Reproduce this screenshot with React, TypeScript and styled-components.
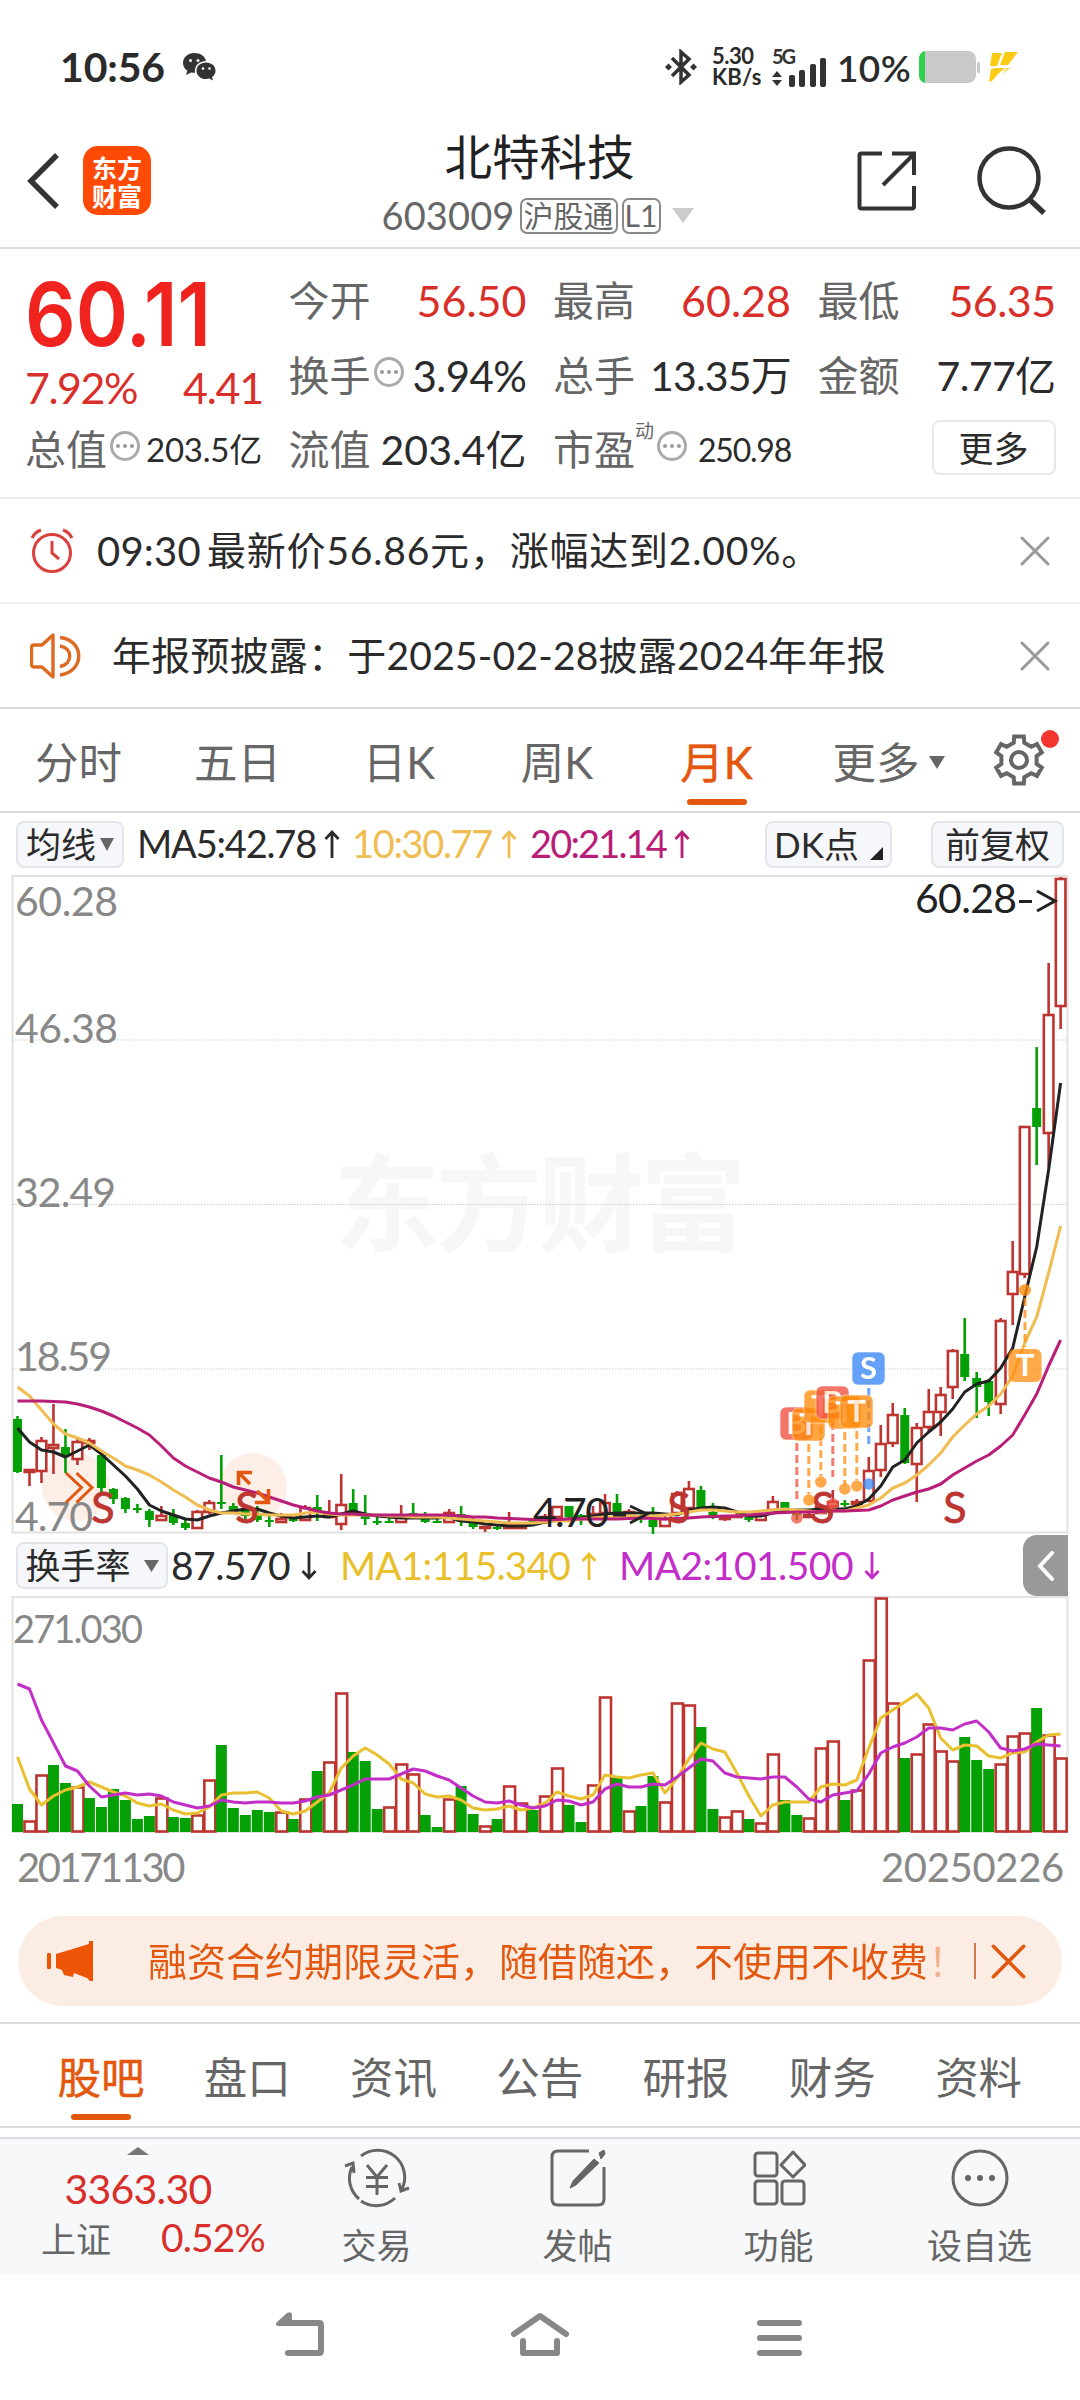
import React, { useLayoutEffect, useRef } from "react";
import styled, { createGlobalStyle } from "styled-components";

const SANS = '"Lato", "Noto Sans CJK SC", sans-serif';
const RED = "#d92f2b";
const ORANGE = "#e3570f";
const GREY = "#666";
const INK = "#2b2b2b";

const Global = createGlobalStyle`
  *{box-sizing:border-box}
  body{margin:0;background:#fff;font-family:${SANS};color:${INK};width:1080px;overflow-x:hidden}
  svg{display:block;flex:none}
`;

/* ---------- text that is tracked to an exact width ---------- */
const FitBox = styled.span<{ $size: number; $color?: string; $weight?: number; $ml?: number; $dy?: number }>`
  display: inline-block;
  white-space: nowrap;
  flex: none;
  font-size: ${(p) => p.$size}px;
  line-height: 1.2;
  font-weight: ${(p) => p.$weight ?? 400};
  color: ${(p) => p.$color ?? INK};
  margin-left: ${(p) => p.$ml ?? 0}px;
  position: relative;
  top: ${(p) => p.$dy ?? 0}px;
`;
type FitProps = { w: number; size: number; color?: string; weight?: number; ml?: number; dy?: number; children: string };
const Fit = ({ w, size, color, weight, ml, dy, children }: FitProps) => {
  const ref = useRef<HTMLSpanElement>(null);
  useLayoutEffect(() => {
    const el = ref.current;
    if (!el) return;
    el.style.width = "auto";
    el.style.letterSpacing = "0px";
    const natural = el.getBoundingClientRect().width;
    el.style.letterSpacing = `${(w - natural) / children.length}px`;
    el.style.width = `${w}px`;
  }, [w, children]);
  return (
    <FitBox ref={ref} $size={size} $color={color} $weight={weight} $ml={ml} $dy={dy}>
      {children}
    </FitBox>
  );
};

const Page = styled.main`
  width: 1080px;
  height: 2400px;
  display: flex;
  flex-direction: column;
  background: #fff;
  overflow: hidden;
`;

/* ---------- status bar ---------- */
const StatusBar = styled.div`
  height: 112px;
  padding: 22px 61px 0 60px;
  display: flex;
  align-items: center;
`;
const Stack = styled.div`
  display: flex;
  flex-direction: column;
  margin-left: 15px;
  width: 50px;
`;
const Spacer = styled.div`
  flex: 1;
`;

/* ---------- header ---------- */
const Header = styled.header`
  height: 137px;
  border-bottom: 2px solid #dcdcdc;
  padding: 3px 33px 0 26px;
  display: flex;
  align-items: center;
`;
const Logo = styled.div`
  width: 68px;
  height: 69px;
  margin: 0 0 0 24px;
  border-radius: 15px;
  background: #ff4a05;
  color: #fff;
  font: 700 25px/28px "Noto Sans CJK SC", sans-serif;
  display: flex;
  flex-direction: column;
  align-items: center;
  justify-content: center;
`;
const TitleBlock = styled.div`
  flex: 1;
  height: 100%;
  display: flex;
  flex-direction: column;
  align-items: center;
  padding: 13px 0 0 71px;
`;
const Title = styled.div`
  font-size: 47.5px;
  line-height: 58px;
  color: #222;
`;
const SubTitle = styled.div`
  display: flex;
  align-items: center;
  height: 38px;
  margin: 11px 4px 0 0;
`;
const Badge = styled.span<{ $w: number; $ml: number }>`
  width: ${(p) => p.$w}px;
  height: 36px;
  margin-left: ${(p) => p.$ml}px;
  border: 2px solid #8a8a8a;
  border-radius: 7px;
  font-size: 30px;
  line-height: 31px;
  color: #666;
  text-align: center;
  white-space: nowrap;
`;

/* ---------- quote ---------- */
const Quote = styled.section`
  height: 251px;
  padding: 15px 0 0 25px;
  border-bottom: 2px solid #eee;
  display: grid;
  grid-template-columns: 237px repeat(3, 238px);
  grid-template-rows: 75px 74px 74px;
  column-gap: 26.500px;
`;
const PriceCell = styled.div`
  grid-row: span 2;
  display: flex;
  flex-direction: column;
`;
const BigPrice = styled.div`
  font: 600 88px/100px Inter, ${SANS};
  color: #f0231f;
  white-space: nowrap;
  letter-spacing: 0;
  transform: scaleX(0.9);
  transform-origin: 0 50%;
`;
const PriceSub = styled.div`
  display: flex;
  justify-content: space-between;
  width: 238px;
  margin-top: -2px;
`;
const Cell = styled.div`
  display: flex;
  align-items: center;
`;
const Label = styled.span`
  font-size: 41px;
  line-height: 50px;
  color: ${GREY};
  white-space: nowrap;
`;
const Sup = styled.span`
  font-size: 19px;
  line-height: 20px;
  color: ${GREY};
  align-self: flex-start;
  margin-top: 8px;
`;
const MoreButton = styled.button`
  width: 124px;
  height: 55px;
  margin: 0 0 4px auto;
  border: 2px solid #e8e8e8;
  border-radius: 8px;
  background: #fff;
  color: ${INK};
  font: 35px/48px ${SANS};
  padding: 0;
`;

/* ---------- notices ---------- */
const Notice = styled.div<{ $line: string }>`
  height: 105px;
  border-bottom: 2px solid ${(p) => p.$line};
  padding: 0 30px;
  display: flex;
  align-items: center;
`;

/* ---------- tabs ---------- */
const Tabs = styled.nav<{ $h: number; $lineTop?: boolean }>`
  height: ${(p) => p.$h}px;
  border-top: ${(p) => (p.$lineTop ? 2 : 0)}px solid #dcdcdc;
  border-bottom: 2px solid #dcdcdc;
  display: flex;
  flex: none;
`;
const Tab = styled.div<{ $w: number; $on?: boolean; $pl?: number }>`
  width: ${(p) => p.$w}px;
  flex: none;
  display: flex;
  align-items: center;
  justify-content: center;
  position: relative;
  padding-top: 4px;
  padding-left: ${(p) => p.$pl ?? 0}px;
  font-size: 43.5px;
  line-height: 52px;
  color: ${(p) => (p.$on ? ORANGE : GREY)};
  -webkit-text-stroke: ${(p) => (p.$on ? 0.5 : 0)}px ${ORANGE};
  &::after {
    content: "";
    display: ${(p) => (p.$on ? "block" : "none")};
    position: absolute;
    left: calc(50% + ${(p) => (p.$pl ?? 0) / 2}px);
    bottom: 6px;
    width: 60px;
    height: 6px;
    margin-left: -30px;
    border-radius: 3px;
    background: ${ORANGE};
  }
`;
const GearWrap = styled.div`
  position: relative;
  margin: 25px 0 0 15px;
`;
const Dot = styled.i`
  position: absolute;
  right: -14px;
  top: -4px;
  width: 18px;
  height: 18px;
  border-radius: 50%;
  background: #f43530;
`;

/* ---------- indicator rows ---------- */
const LegendRow = styled.div<{ $h: number }>`
  height: ${(p) => p.$h}px;
  flex: none;
  display: flex;
  align-items: center;
  padding-left: 16px;
`;
const Chip = styled.div<{ $w: number; $ml?: number }>`
  width: ${(p) => p.$w}px;
  height: 47px;
  flex: none;
  margin-left: ${(p) => p.$ml ?? 0}px;
  border: 2px solid #e3e5ea;
  border-radius: 8px;
  background: #f6f7fa;
  font-size: 35px;
  line-height: 43px;
  display: flex;
  align-items: center;
  justify-content: center;
  white-space: nowrap;
`;
const Collapse = styled.div`
  width: 45px;
  height: 61px;
  margin-left: auto;
  margin-right: 12px;
  border-radius: 14px 0 0 14px;
  background: #999;
  display: flex;
  align-items: center;
  justify-content: center;
`;
const Dates = styled.div`
  height: 82px;
  flex: none;
  padding: 9px 16px 0 17px;
  display: flex;
  justify-content: space-between;
`;

/* ---------- banner ---------- */
const Banner = styled.div`
  height: 90px;
  flex: none;
  margin: 0 18px 16px;
  border-radius: 45px;
  background: #fcede4;
  color: ${ORANGE};
  display: flex;
  align-items: center;
  padding-left: 29px;
`;
const BannerText = styled.span`
  margin-left: 54px;
  width: 826px;
  font-size: 39px;
  line-height: 50px;
  white-space: nowrap;
  background: linear-gradient(90deg, ${ORANGE} 775px, #f3b08a 788px);
  -webkit-background-clip: text;
  color: transparent;
`;
const Rule = styled.i`
  width: 2px;
  height: 36px;
  background: #d9764a;
  margin-right: 15px;
`;

/* ---------- bottom bar ---------- */
const Bottom = styled.footer`
  margin-top: 9px;
  height: 137px;
  flex: none;
  border-top: 2px solid #d9dbde;
  background: #f7f8fa;
  display: flex;
`;
const IndexBox = styled.div`
  width: 276px;
  display: flex;
  flex-direction: column;
  align-items: center;
  padding-top: 8px;
`;
const IndexLine = styled.div`
  display: flex;
  align-items: center;
  width: 224px;
  height: 48px;
  margin: 9px 0 0 30px;
  font-size: 35px;
  color: ${GREY};
  justify-content: space-between;
`;
const Action = styled.div`
  width: 201px;
  display: flex;
  flex-direction: column;
  align-items: center;
  padding-top: 9px;
  font-size: 35px;
  line-height: 44px;
  color: ${GREY};
  gap: 15px;
`;
const SysNav = styled.div`
  height: 126px;
  padding: 37px 0 0 274px;
  display: flex;
  gap: 184px;
`;

/* ---------- icons ---------- */
const Cross = ({ s, c, w = 3 }: { s: number; c: string; w?: number }) => (
  <svg width={s} height={s} viewBox="0 0 30 30" stroke={c} strokeWidth={w} fill="none" strokeLinecap="round">
    <path d="M2 2L28 28M28 2L2 28" />
  </svg>
);
const Info = styled.i`
  flex: none;
  width: 30px;
  height: 30px;
  margin: -8px 0 0 3px;
  border: 3px solid #aaa;
  border-radius: 50%;
  display: flex;
  align-items: center;
  justify-content: center;
  gap: 3px;
`;
const InfoDot = styled.b`
  width: 4px;
  height: 4px;
  border-radius: 50%;
  background: #999;
`;
const InfoIcon = () => (
  <Info>
    <InfoDot />
    <InfoDot />
    <InfoDot />
  </Info>
);
const ArrowSvg = styled.svg<{ $ml: number }>`
  margin-left: ${(p) => p.$ml}px;
`;
const Arrow = ({ up, c, ml }: { up?: boolean; c: string; ml: number }) => (
  <ArrowSvg $ml={ml} width="16" height="30" viewBox="0 0 16 30" fill="none" stroke={c} strokeWidth="2.8">
    <path d={up ? "M8 29V3M1.5 10L8 3L14.5 10" : "M8 1V27M1.5 20L8 27L14.5 20"} />
  </ArrowSvg>
);
const TriSvg = styled.svg<{ $ml: number }>`
  margin-left: ${(p) => p.$ml}px;
`;
const Tri = ({ w, h, c, ml = 0 }: { w: number; h: number; c: string; ml?: number }) => (
  <TriSvg $ml={ml} width={w} height={h} viewBox="0 0 10 10" preserveAspectRatio="none" fill={c}>
    <path d="M0 0H10L5 10Z" />
  </TriSvg>
);
const WeChat = styled.svg`
  margin-left: 17px;
`;
const Offset = styled.div<{ $ml: number; $mt?: number }>`
  flex: none;
  margin-left: ${(p) => p.$ml}px;
  margin-top: ${(p) => p.$mt ?? 0}px;
`;

/* ---------- chart data ---------- */
/* direction (1 up, 0 down), high, body top, body bottom, low, turnover bar top */
const K: number[][] = [
  [0,1416,1419,1472,1473,1804],[1,1469,1469,1472,1486,1821],[1,1437,1440,1471,1483,1775],[1,1404,1444,1448,1474,1765],
  [0,1429,1447,1455,1473,1783],[1,1439,1441,1459,1465,1787],[1,1438,1440,1443,1450,1798],[0,1450,1455,1488,1493,1807],
  [0,1488,1489,1499,1504,1789],[0,1497,1498,1509,1513,1800],[0,1504,1508,1510,1513,1819],[0,1509,1511,1520,1527,1816],
  [1,1506,1515,1520,1521,1798],[0,1509,1515,1523,1525,1817],[0,1520,1523,1528,1530,1818],[1,1510,1511,1528,1529,1815],
  [1,1500,1502,1512,1514,1780],[0,1455,1502,1503,1509,1745],[0,1503,1506,1511,1512,1808],[0,1508,1509,1516,1520,1815],
  [0,1506,1515,1520,1522,1810],[0,1516,1520,1522,1527,1812],[1,1513,1518,1522,1523,1812],[0,1517,1518,1521,1522,1819],
  [1,1505,1507,1520,1521,1799],[0,1495,1507,1512,1521,1771],[1,1500,1514,1517,1518,1762],[1,1474,1504,1524,1530,1693],
  [0,1489,1503,1511,1513,1752],[0,1495,1516,1519,1525,1761],[0,1517,1521,1522,1525,1809],[0,1517,1521,1523,1523,1807],
  [1,1505,1515,1522,1523,1764],[0,1503,1513,1516,1518,1774],[0,1512,1515,1522,1523,1815],[0,1518,1521,1523,1523,1827],
  [1,1509,1512,1522,1523,1799],[0,1506,1514,1522,1526,1786],[0,1516,1522,1527,1529,1814],[1,1526,1526,1528,1532,1826],
  [0,1525,1527,1528,1530,1819],[1,1512,1523,1528,1529,1786],[1,1523,1524,1528,1528,1803],[0,1518,1519,1525,1526,1810],
  [1,1514,1516,1522,1524,1796],[1,1506,1506,1517,1518,1768],[0,1506,1506,1517,1518,1805],[0,1514,1515,1518,1525,1822],
  [1,1506,1513,1518,1520,1785],[1,1494,1502,1513,1514,1697],[0,1494,1503,1513,1515,1778],[1,1509,1511,1513,1514,1811],
  [0,1512,1515,1517,1523,1806],[0,1507,1520,1527,1534,1776],[1,1515,1518,1526,1527,1802],[1,1491,1493,1513,1514,1703],
  [1,1481,1488,1508,1510,1705],[0,1486,1490,1509,1510,1727],[0,1503,1512,1518,1519,1809],[1,1515,1516,1519,1521,1817],
  [1,1513,1515,1517,1518,1811],[0,1515,1516,1520,1522,1819],[1,1513,1514,1520,1521,1823],[1,1496,1501,1510,1511,1754],
  [0,1502,1502,1509,1510,1800],[0,1510,1512,1515,1520,1815],[1,1513,1514,1517,1517,1818],[1,1505,1506,1513,1514,1748],
  [1,1490,1501,1506,1507,1741],[0,1500,1503,1505,1507,1800],[1,1499,1501,1504,1505,1790],[1,1457,1470,1501,1502,1660],
  [1,1425,1443,1470,1477,1598],[1,1403,1414,1443,1447,1703],[0,1408,1415,1463,1464,1758],[1,1423,1427,1464,1502,1754],
  [1,1389,1411,1427,1432,1724],[1,1387,1394,1412,1436,1751],[1,1349,1350,1387,1399,1761],[0,1318,1354,1377,1381,1737],
  [0,1372,1378,1387,1418,1760],[0,1379,1381,1402,1416,1769],[1,1318,1320,1404,1414,1764],[1,1241,1271,1294,1325,1736],
  [1,1126,1126,1274,1278,1733],[0,1047,1108,1127,1165,1708],[1,963,1014,1133,1167,1735],[1,877,878,1006,1029,1758],
];
/* months whose turnover bar has the opposite colour of the price candle */
const FLIPPED = [3, 6, 31, 33];
const candleUp = (i: number) => K[i][0] === 1;
const barUp = (i: number) => (FLIPPED.includes(i) ? !candleUp(i) : candleUp(i));

const MA5 = [1428,1442,1450,1452,1457,1451,1445,1454,1465,1476,1489,1505,1511,1515,1519,1520,1516,1513,1511,1509,1509,1513,1516,1518,1517,1516,1517,1514,1511,1514,1516,1517,1518,1518,1518,1518,1517,1521,1522,1524,1525,1526,1526,1525,1522,1520,1519,1518,1516,1514,1513,1513,1513,1513,1514,1515,1510,1508,1507,1508,1512,1516,1516,1513,1511,1510,1510,1509,1509,1509,1506,1499,1486,1467,1460,1443,1432,1422,1409,1392,1384,1381,1368,1348,1297,1247,1170,1083];
const MA10 = [1387,1396,1410,1424,1434,1438,1443,1451,1458,1466,1470,1475,1482,1490,1497,1505,1510,1513,1513,1514,1514,1515,1515,1515,1513,1512,1514,1515,1515,1515,1515,1516,1516,1517,1517,1517,1518,1519,1520,1521,1522,1523,1523,1523,1522,1521,1521,1519,1518,1517,1517,1516,1516,1516,1515,1514,1512,1510,1510,1511,1512,1512,1511,1510,1509,1510,1511,1512,1511,1511,1508,1505,1498,1488,1483,1475,1465,1453,1437,1425,1414,1406,1394,1376,1343,1317,1273,1226];
const MA20 = [1401,1401,1401,1401.5,1402,1404,1407,1411,1416,1422,1428,1435,1446,1458,1466,1472,1478,1482,1487,1490,1493,1497,1501,1505,1508,1511,1513,1514,1514,1515,1515,1515,1515,1515,1515,1515,1515,1516,1517,1517,1518,1518.5,1519,1519.5,1520,1519.5,1519,1519,1519,1519,1519,1518.5,1518,1518.5,1519,1518.5,1518,1517,1516.5,1516,1516,1515,1514,1513,1512.5,1512,1512,1511.5,1511,1511,1510.5,1510,1506,1500,1496,1492,1489,1484,1475,1468,1461,1455,1446,1435,1415,1394,1366,1340];
const V1 = [1757,1789,1805,1796,1790,1787,1782,1787,1792,1796,1803,1806,1804,1810,1814,1813,1807,1795,1793,1793,1792,1798,1811,1814,1811,1802,1793,1768,1756,1748,1755,1764,1779,1783,1794,1797,1796,1800,1808,1810,1809,1806,1810,1808,1803,1792,1796,1799,1795,1775,1777,1778,1775,1773,1793,1778,1759,1743,1749,1752,1773,1796,1816,1805,1802,1802,1802,1787,1784,1785,1780,1748,1718,1710,1702,1694,1708,1738,1750,1745,1746,1756,1758,1753,1752,1742,1735,1734];
const V2 = [1684,1689,1720,1743,1766,1771,1786,1797,1795,1793,1795,1794,1796,1802,1805,1808,1806,1800,1802,1803,1802,1802,1803,1803,1801,1797,1795,1790,1785,1779,1779,1779,1774,1769,1771,1776,1780,1788,1796,1802,1803,1801,1805,1808,1806,1800,1801,1805,1802,1789,1784,1787,1787,1784,1785,1777,1768,1759,1761,1773,1777,1778,1779,1777,1777,1787,1799,1802,1795,1793,1791,1774,1753,1747,1743,1737,1728,1728,1730,1724,1721,1732,1748,1751,1749,1744,1745,1746];

const X = (i: number) => 17.5 + i * 11.99;
const line = (a: number[]) => a.map((y, i) => `${X(i).toFixed(1)},${y}`).join(" ");
const UP = "#bd3531";
const DOWN = "#05a005";

const tags = [
  { x: 780, y: 1407, t: "B", c: "#f2503f", at: 65, dot: 1518, to: 1499 },
  { x: 792, y: 1408, t: "T", c: "#ff8c0d", at: 66, dot: 1500, to: 1494 },
  { x: 804, y: 1390, t: "T", c: "#ff8c0d", at: 67, dot: 1482, to: 1476 },
  { x: 816, y: 1386, t: "B", c: "#f2503f", at: 68, dot: 1504, to: 1477 },
  { x: 828, y: 1396, t: "T", c: "#ff8c0d", at: 69, dot: 1489, to: 1484 },
  { x: 840, y: 1395, t: "T", c: "#ff8c0d", at: 70, dot: 1486, to: 1480 },
  { x: 852, y: 1352, t: "S", c: "#3a87f8", at: 71, dot: 1484, to: 1444 },
];

const axis: [string, number, number][] = [
  ["60.28", 916, 100],
  ["46.38", 1043, 100],
  ["32.49", 1207, 98],
  ["18.59", 1371, 94],
  ["4.70", 1531, 75],
];

const PriceChart = () => (
  <svg width="1080" height="660" viewBox="0 875 1080 660" fontFamily={SANS}>
    <text x="334" y="1243" fontSize="106" fontWeight="700" fill="#f7f7f7" textLength="412">东方财富</text>
    <path d="M12.500 1532.500V876H1067.500V1532.500Z" fill="none" stroke="#e2e2e2" strokeWidth="2" />
    {[1040, 1204.5, 1369].map((y) => (
      <path key={y} d={`M12 ${y}H1068`} stroke="#ccc" strokeWidth="1.2" strokeDasharray="1.5 1.5" />
    ))}
    <circle cx="76" cy="1487" r="34" fill="#fdeee7" />
    <circle cx="253" cy="1487" r="34" fill="#fdeee7" />
    {axis.map(([t, y, w]) => (
      <text key={t} x="15" y={y} fontSize="41" fill="#888" textLength={w + 3}>{t}</text>
    ))}
    {K.map(([, h, t, b, l], i) => {
      const up = candleUp(i);
      return (
        <g key={i} stroke={up ? UP : DOWN} strokeWidth="2.6">
          <path d={`M${X(i)} ${h}V${t}M${X(i)} ${b}V${l}`} />
          {up ? (
            <rect x={X(i) - 4.8} y={t + 1} width="9.600" height={Math.max(1, b - t - 1)} fill="#fff" />
          ) : (
            <rect x={X(i) - 4.5} y={t} width="9" height={Math.max(2, b - t)} fill={DOWN} stroke="none" />
          )}
        </g>
      );
    })}
    <g fill="none" strokeWidth="3" strokeLinejoin="round">
      <polyline points={line(MA5)} stroke="#222" />
      <polyline points={line(MA10)} stroke="#efbd52" />
      <polyline points={line(MA20)} stroke="#b91e78" />
    </g>
    <g fill="none" stroke={ORANGE} strokeWidth="3">
      <path d="M66 1473L81.500 1487.500L66 1502.500M76.500 1473L92 1487.500L76.500 1502.500" />
      <path d="M250 1484L239 1473M238.500 1485V1472.500H252M257 1491L268 1501M268.500 1489V1502.500H255" strokeWidth="3.600" />
    </g>
    {[103, 247, 679, 823, 955].map((x) => (
      <text key={x} x={x} y="1523" fontSize="43" fontWeight="400" fill={UP} stroke={UP} strokeWidth="0.8" textAnchor="middle">S</text>
    ))}
    <text x="533" y="1527" fontSize="41" fill="#222" textLength="76">4.70</text>
    <path d="M613 1515H626M630 1506L647 1514L630 1523" fill="none" stroke="#222" strokeWidth="2.800" />
    <text x="915" y="913" fontSize="41" fill="#222" textLength="102">60.28</text>
    <path d="M1019 901.500H1032M1037 891L1055 901L1037 911" fill="none" stroke="#222" strokeWidth="3" />
    {tags.map((g) => (
      <g key={g.at}>
        <path d={`M${X(g.at)} ${g.y + 36}V${g.to}`} stroke={g.c} strokeWidth="3" strokeDasharray="8 4" opacity="0.75" />
        <circle cx={X(g.at)} cy={g.dot} r="5.800" fill={g.c} opacity="0.75" />
      </g>
    ))}
    {tags.map((g) => (
      <g key={g.at} opacity="0.78">
        <rect x={g.x} y={g.y} width="33" height="33" rx="6" fill={g.c} stroke="#fff" strokeOpacity="0.6" />
        <text x={g.x + 16.500} y={g.y + 27} fontSize="31" fontWeight="700" fill="#fff" textAnchor="middle">{g.t}</text>
      </g>
    ))}
    <g>
      <circle cx="1025" cy="1290" r="6" fill="#ff8c0d" opacity="0.8" />
      <path d="M1025 1298V1347" stroke="#ff8c0d" strokeWidth="3" strokeDasharray="8 4" opacity="0.75" />
      <rect x="1008.500" y="1349" width="33" height="33" rx="6" fill="#ff8c0d" opacity="0.75" />
      <text x="1025" y="1376" fontSize="31" fontWeight="700" fill="#fff" textAnchor="middle">T</text>
    </g>
  </svg>
);

const TurnoverChart = () => (
  <svg width="1080" height="238" viewBox="0 1596 1080 238" fontFamily={SANS}>
    <path d="M12.500 1832V1597H1067.500V1832Z" fill="none" stroke="#e2e2e2" strokeWidth="2" />
    <text x="13" y="1643" fontSize="38" fill="#888" textLength="130">271.030</text>
    {K.map((k, i) =>
      barUp(i) ? (
        <rect key={i} x={X(i) - 5} y={k[5] + 0.5} width="11" height={1831 - k[5]} fill="#fff" stroke={UP} strokeWidth="2.6" />
      ) : (
        <rect key={i} x={X(i) - 5.5} y={k[5]} width="11" height={1832 - k[5]} fill={DOWN} />
      )
    )}
    <g fill="none" strokeWidth="3" strokeLinejoin="round">
      <polyline points={line(V1)} stroke="#e9c030" />
      <polyline points={line(V2)} stroke="#c32dc8" />
    </g>
  </svg>
);

/* six-tooth cog outline round (26, 26) */
const gearPath = (() => {
  const pts: string[] = [];
  for (let i = 0; i < 6; i++) {
    const a = (i * Math.PI) / 3 - Math.PI / 2;
    [[-0.2, 24], [0.2, 24], [0.3, 18], [0.747, 18]].forEach(([d, r]) =>
      pts.push(`${(26 + r * Math.cos(a + d)).toFixed(1)} ${(26 + r * Math.sin(a + d)).toFixed(1)}`)
    );
  }
  return `M${pts.join("L")}Z`;
})();

const G = { fill: "none", stroke: "#666", strokeWidth: 3 } as const;

export default function App() {
  return (
    <Page>
      <Global />
      <StatusBar>
        <Fit w={105} size={41} weight={700}>10:56</Fit>
        <WeChat width="34" height="29" viewBox="0 0 34 29">
          <path d="M12.500 1C5.500 1 1 5.500 1 11c0 3.200 1.700 6 4.400 7.800L4 23l5-2.600c1.300.3 2.600.5 4 .4C12 14 17 9 24 9 23 4 18.500 1 12.500 1Z" fill="#333" />
          <path d="M24 10.500c-5.500 0-9.500 3.600-9.500 8.200S18.500 27 24 27c1.200 0 2.300-.2 3.300-.5L31 28.500l-1-3.400c2.200-1.500 3.500-3.800 3.500-6.400 0-4.600-4-8.200-9.500-8.200Z" fill="#333" />
          <g fill="#fff"><circle cx="8.500" cy="8.500" r="1.500" /><circle cx="16" cy="8.500" r="1.500" /><circle cx="21" cy="16.500" r="1.300" /><circle cx="27.500" cy="16.500" r="1.300" /></g>
        </WeChat>
        <Spacer />
        <svg width="32" height="36" viewBox="0 0 32 36" fill="none" stroke="#333" strokeWidth="3.500">
          <path d="M7 9L24 26L16 33V3L24 10L7 27" />
          <g fill="#333" stroke="none"><path d="M3.500 14.500L7 18L3.500 21.500L0 18Z" /><path d="M28.500 14.500L32 18L28.500 21.500L25 18Z" /></g>
        </svg>
        <Stack>
          <Fit w={48} size={22} weight={700} dy={2}>5.30</Fit>
          <Fit w={51} size={22} weight={700} dy={-3}>KB/s</Fit>
        </Stack>
        <Offset $ml={10}>
          <svg width="56" height="40" viewBox="0 0 56 40">
            <text x="0" y="17" fontSize="20" fontWeight="700" fill="#333" fontFamily={SANS} textLength="24">5G</text>
            <g fill="#333">
              <path d="M0 30L5 24L10 30ZM0 33L5 39L10 33Z" />
              <rect x="17" y="28" width="6" height="12" rx="2" /><rect x="27" y="23" width="6" height="17" rx="2" />
              <rect x="38" y="17" width="6" height="23" rx="2" /><rect x="48" y="11" width="6" height="29" rx="2" />
            </g>
          </svg>
        </Offset>
        <Fit w={74} size={37} ml={9} weight={600} dy={1}>10%</Fit>
        <Offset $ml={8}>
          <svg width="61" height="32" viewBox="0 0 61 32">
            <rect x="0" y="0" width="57" height="32" rx="8" fill="#c9c9c9" />
            <path d="M6 0C2 1 0 4 0 8v16c0 4 2 7 6 8Z" fill="#2dd24a" />
            <rect x="58" y="11" width="3" height="11" rx="1.500" fill="#c9c9c9" />
          </svg>
        </Offset>
        <Offset $ml={9}>
          <svg width="30" height="30" viewBox="0 0 30 30" fill="#fbcb14">
            <path d="M3 1H13L8 14H1ZM16 0H29L19 13H11ZM7 16H16L9 22L3 29L0 30L2 17ZM18 16H21L13 22Z" />
          </svg>
        </Offset>
      </StatusBar>

      <Header>
        <svg width="33" height="56" viewBox="0 0 33 56" fill="none" stroke="#333" strokeWidth="5.500">
          <path d="M31 2L5 28L31 54" />
        </svg>
        <Logo>
          <span>东方</span>
          <span>财富</span>
        </Logo>
        <TitleBlock>
          <Title>北特科技</Title>
          <SubTitle>
            <Fit w={133} size={38} color="#666">603009</Fit>
            <Badge $w={98} $ml={5}>沪股通</Badge>
            <Badge $w={39} $ml={4}>L1</Badge>
            <Tri w={22} h={15} c="#ccc" ml={11} />
          </SubTitle>
        </TitleBlock>
        <svg width="60" height="60" viewBox="0 0 60 60" fill="none" stroke="#333" strokeWidth="4">
          <path d="M25 2.500H4.500Q2.500 2.500 2.500 4.500V55.500Q2.500 57.500 4.500 57.500H55Q57 57.500 57 55.500V35M35 2.500H57V24M57 3L26 34" />
        </svg>
        <Offset $ml={60}>
          <svg width="70" height="70" viewBox="0 0 70 70" fill="none" stroke="#333" strokeWidth="4.500">
            <circle cx="32" cy="32" r="29.500" />
            <path d="M52 53L67 67" strokeWidth="5.500" />
          </svg>
        </Offset>
      </Header>

      <Quote>
        <PriceCell>
          <BigPrice>60.11</BigPrice>
          <PriceSub>
            <Fit w={112} size={43} color={RED}>7.92%</Fit>
            <Fit w={80} size={43} color={RED}>4.41</Fit>
          </PriceSub>
        </PriceCell>
        <Cell><Label>今开</Label><Spacer /><Fit w={110} size={43} color={RED}>56.50</Fit></Cell>
        <Cell><Label>最高</Label><Spacer /><Fit w={110} size={43} color={RED}>60.28</Fit></Cell>
        <Cell><Label>最低</Label><Spacer /><Fit w={107} size={43} color={RED}>56.35</Fit></Cell>
        <Cell><Label>换手</Label><InfoIcon /><Spacer /><Fit w={114} size={42}>3.94%</Fit></Cell>
        <Cell><Label>总手</Label><Spacer /><Fit w={141} size={41}>13.35万</Fit></Cell>
        <Cell><Label>金额</Label><Spacer /><Fit w={119} size={41}>7.77亿</Fit></Cell>
        <Cell><Label>总值</Label><InfoIcon /><Spacer /><Fit w={116} size={33}>203.5亿</Fit></Cell>
        <Cell><Label>流值</Label><Spacer /><Fit w={146} size={41}>203.4亿</Fit></Cell>
        <Cell><Label>市盈</Label><Sup>动</Sup><InfoIcon /><Spacer /><Fit w={93} size={32}>250.98</Fit></Cell>
        <Cell><MoreButton>更多</MoreButton></Cell>
      </Quote>

      <Notice $line="#eee">
        <svg width="44" height="46" viewBox="0 0 44 46" fill="none" stroke="#d9413c" strokeWidth="3">
          <circle cx="22" cy="25" r="18.500" />
          <path d="M22 13V25L29 31M2 10Q5 4 11 2M42 10Q39 4 33 2" />
        </svg>
        <Fit w={104} size={40} ml={23}>09:30</Fit>
        <Fit w={614} size={39} ml={6}>最新价56.86元，涨幅达到2.00%。</Fit>
        <Spacer />
        <Cross s={30} c="#999" />
      </Notice>
      <Notice $line="#dcdcdc">
        <svg width="52" height="46" viewBox="0 0 52 46" fill="none" stroke="#dd6a22" strokeWidth="3.400">
          <path d="M23 2V44L12 34H4Q1.500 34 1.500 31V15Q1.500 12 4 12H12Z" strokeLinejoin="round" />
          <path d="M30 4.500C55 7 55 39 30 42M30 13C43 15 43 31 30 33.500" />
        </svg>
        <Fit w={774} size={39} ml={30}>年报预披露：于2025-02-28披露2024年年报</Fit>
        <Spacer />
        <Cross s={30} c="#999" />
      </Notice>

      <Tabs $h={104}>
        <Tab $w={157}>分时</Tab>
        <Tab $w={161}>五日</Tab>
        <Tab $w={162}>日K</Tab>
        <Tab $w={154}>周K</Tab>
        <Tab $w={165} $on>月K</Tab>
        <Tab $w={179}>更多<Tri w={16} h={13} c="#666" ml={9} /></Tab>
        <GearWrap>
          <svg width="52" height="52" viewBox="0 0 52 52" fill="none" stroke="#666" strokeWidth="4">
            <path d={gearPath} />
            <circle cx="26" cy="26" r="8" />
          </svg>
          <Dot />
        </GearWrap>
      </Tabs>

      <LegendRow $h={62}>
        <Chip $w={108}>均线<Tri w={14} h={13} c="#666" ml={4} /></Chip>
        <Fit w={179} size={38} ml={13}>MA5:42.78</Fit>
        <Arrow up c={INK} ml={8} />
        <Fit w={140} size={38} color="#efbd52" ml={12}>10:30.77</Fit>
        <Arrow up c="#efbd52" ml={9} />
        <Fit w={136} size={38} color="#b91e78" ml={13}>20:21.14</Fit>
        <Arrow up c="#b91e78" ml={8} />
        <Chip $w={127} $ml={75}>DK点
          <Offset $ml={11} $mt={18}><svg width="13" height="13" viewBox="0 0 13 13"><path d="M13 0V13H0Z" fill="#222" /></svg></Offset>
        </Chip>
        <Chip $w={133} $ml={39}>前复权</Chip>
      </LegendRow>
      <PriceChart />
      <LegendRow $h={61}>
        <Chip $w={152}>换手率<Tri w={15} h={12} c="#666" ml={13} /></Chip>
        <Fit w={119} size={39} ml={3}>87.570</Fit>
        <Arrow c={INK} ml={11} />
        <Fit w={230} size={39} color="#e9c02a" ml={23}>MA1:115.340</Fit>
        <Arrow up c="#e9c02a" ml={11} />
        <Fit w={234} size={39} color="#c32dc8" ml={22}>MA2:101.500</Fit>
        <Arrow c="#c32dc8" ml={11} />
        <Collapse>
          <svg width="18" height="30" viewBox="0 0 18 30" fill="none" stroke="#fff" strokeWidth="4" strokeLinecap="round">
            <path d="M15 2L3 15L15 28" />
          </svg>
        </Collapse>
      </LegendRow>
      <TurnoverChart />
      <Dates>
        <Fit w={166} size={40} color="#888">20171130</Fit>
        <Fit w={183} size={40} color="#888">20250226</Fit>
      </Dates>

      <Banner>
        <svg width="47" height="40" viewBox="0 0 47 40" fill="#ee5405">
          <rect x="0" y="12" width="4" height="16" rx="1" />
          <path d="M9 13L42 3V0H46V40H43L40 37L27 32L26 36L17 34L15 29L9 27Z" />
        </svg>
        <BannerText>融资合约期限灵活，随借随还，不使用不收费！</BannerText>
        <Rule />
        <Cross s={35} c={ORANGE} />
      </Banner>
      <Tabs $h={106} $lineTop>
        <Tab $w={174} $on $pl={28}>股吧</Tab>
        {["盘口", "资讯", "公告", "研报", "财务", "资料"].map((t) => (
          <Tab key={t} $w={146.3}>{t}</Tab>
        ))}
      </Tabs>

      <Bottom>
        <IndexBox>
          <svg width="22" height="8" viewBox="0 0 22 8"><path d="M0 8L11 0L22 8Z" fill="#777" /></svg>
          <Fit w={147} size={41} color={RED} dy={9}>3363.30</Fit>
          <IndexLine><span>上证</span><Fit w={104} size={39} color={RED}>0.52%</Fit></IndexLine>
        </IndexBox>
        <Action>
          <svg width="66" height="60" viewBox="0 0 66 60" {...G}>
            <path d="M15 51A27 27 0 0 1 8 19M17 8A27 27 0 0 1 58 41M51 50A27 27 0 0 1 17 53M1 18L9 15L10 25M65 40L57 43L55 35" />
            <path d="M23 17L33 29L43 17M22 29.500H44M22 38.500H44M33 29V47" />
          </svg>
          交易
        </Action>
        <Action>
          <svg width="58" height="60" viewBox="0 0 58 60" {...G}>
            <path d="M40 3H9Q3 3 3 9V51Q3 57 9 57H49Q55 57 55 51V19" />
            <path d="M45 11L50 15L27 37L21 40L24 33ZM50 5L55 2L56 6L52 11Z" fill="#666" strokeWidth="1" />
          </svg>
          发帖
        </Action>
        <Action>
          <svg width="54" height="60" viewBox="0 0 54 60" {...G}>
            <rect x="3" y="5" width="22" height="23" rx="3" /><rect x="3" y="33" width="22" height="23" rx="3" />
            <rect x="30" y="33" width="22" height="23" rx="3" />
            <path d="M41 4L53 17L41 29L29 17Z" strokeLinejoin="round" />
          </svg>
          功能
        </Action>
        <Action>
          <svg width="60" height="60" viewBox="0 0 60 60" {...G}>
            <circle cx="30" cy="30" r="27" />
            <g fill="#666" stroke="none"><circle cx="18" cy="30" r="3" /><circle cx="30" cy="30" r="3" /><circle cx="42" cy="30" r="3" /></g>
          </svg>
          设自选
        </Action>
      </Bottom>
      <SysNav>
        <svg width="52" height="48" viewBox="0 0 52 48" fill="#888">
          <path d="M13 2Q17 0 18 3V9H45Q50 9 50 14V40Q50 45 45 45H14Q11 45 11 42T14 39H44V15H5Q0 15 3 11Z" />
        </svg>
        <svg width="60" height="48" viewBox="0 0 60 48" fill="none" stroke="#888" strokeWidth="6" strokeLinecap="round" strokeLinejoin="round">
          <path d="M4 23L30 5L56 23M13 30V42H47V30" />
        </svg>
        <svg width="52" height="48" viewBox="0 0 52 48" fill="none" stroke="#888" strokeWidth="6" strokeLinecap="round">
          <path d="M6 12H45M6 27H45M6 42H45" />
        </svg>
      </SysNav>
    </Page>
  );
}
